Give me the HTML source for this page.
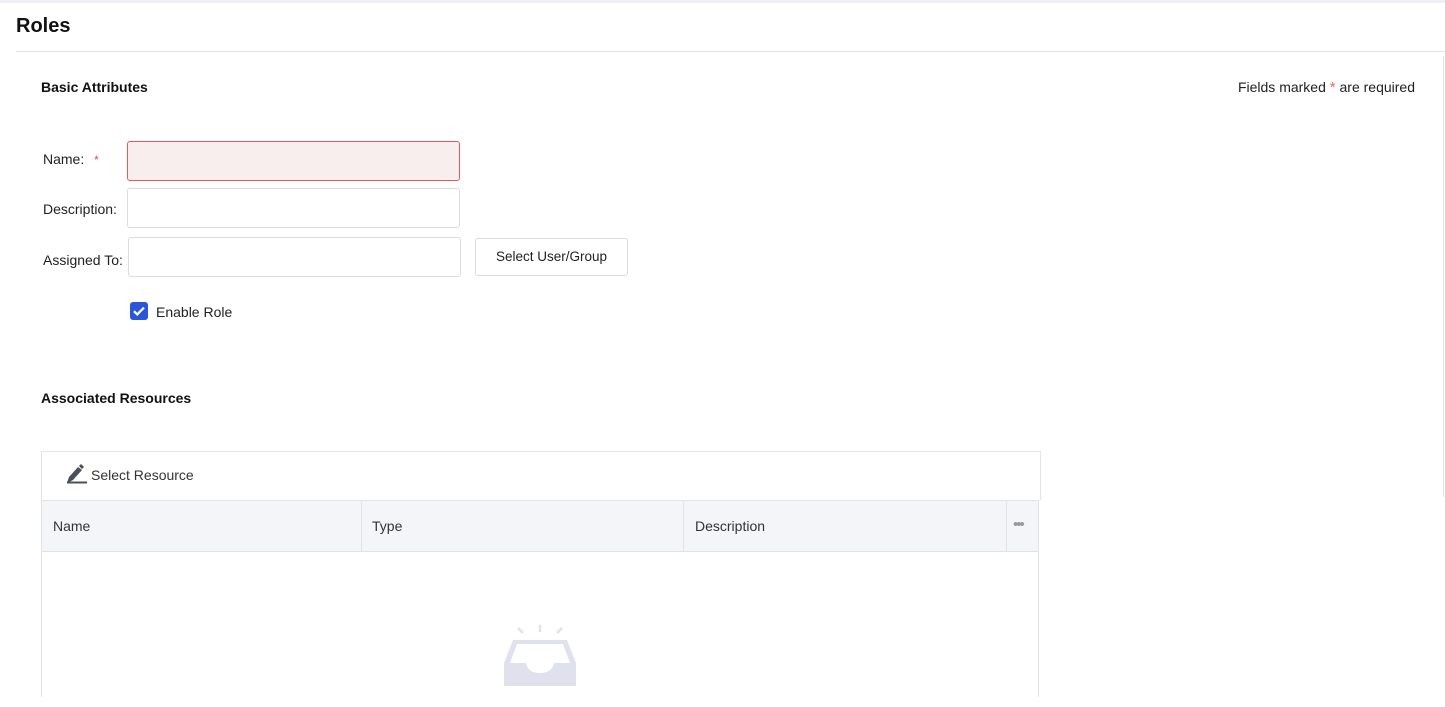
<!DOCTYPE html>
<html><head><meta charset="utf-8"><style>
*{box-sizing:border-box;margin:0;padding:0}
body{width:1445px;height:707px;overflow:hidden;background:#fff;font-family:"Liberation Sans",sans-serif;color:#191919;position:relative}
.a{position:absolute}
.inp{position:absolute;border:1px solid #dcdcdc;border-radius:3px;background:#fff}
.lbl{position:absolute;font-size:14px;color:#222}
</style></head><body>
<div class="a" style="left:0;top:0;width:1445px;height:3px;background:#eef0f5"></div>
<div class="a" style="left:16px;top:15px;font-size:20px;font-weight:bold;color:#111">Roles</div>
<div class="a" style="left:16px;top:51px;width:1429px;height:1px;background:#e2e2e6"></div>
<div class="a" style="left:1443px;top:56px;width:1px;height:441px;background:#e6e6ea"></div>
<div class="a" style="left:41px;top:79px;font-size:14px;font-weight:bold;color:#111">Basic Attributes</div>
<div class="a" style="right:30px;top:79px;font-size:14px;color:#222;white-space:nowrap">Fields marked <span style="color:#e56a6a;font-size:15px">*</span> are required</div>

<div class="lbl" style="left:43px;top:151px">Name: <span style="color:#e5484d;font-size:12px;margin-left:6px">*</span></div>
<div class="inp" style="left:127px;top:141px;width:333px;height:40px;border-color:#e55a5a;background:#f9eeee"></div>
<div class="lbl" style="left:43px;top:201px">Description:</div>
<div class="inp" style="left:127px;top:188px;width:333px;height:40px"></div>
<div class="lbl" style="left:43px;top:252px">Assigned To:</div>
<div class="inp" style="left:128px;top:237px;width:333px;height:40px"></div>
<div class="inp" style="left:475px;top:238px;width:153px;height:38px;font-size:13.5px;color:#222;text-align:center;line-height:36px">Select User/Group</div>

<div class="a" style="left:130px;top:302px;width:18px;height:18px;background:#2c56d8;border-radius:3px">
<svg width="18" height="18" viewBox="0 0 18 18"><path d="M4 9.2l3.2 3.2L14 5.6" stroke="#fff" stroke-width="2.2" fill="none"/></svg></div>
<div class="lbl" style="left:156px;top:304px">Enable Role</div>

<div class="a" style="left:41px;top:390px;font-size:14px;font-weight:bold;color:#111">Associated Resources</div>

<div class="a" style="left:41px;top:451px;width:1000px;height:49px;border:1px solid #e2e2e8;border-bottom:none"></div>
<svg class="a" style="left:66px;top:464px" width="22" height="20" viewBox="0 0 22 20"><path d="M1 19L3 13L12 3L16 6L7 16Z" fill="#4a4f5a"/><path d="M13 2L15 0L18 3L16 5Z" fill="#4a4f5a"/><rect x="1" y="17.5" width="20" height="2" fill="#4a4f5a"/></svg>
<div class="a" style="left:91px;top:467px;font-size:14px;color:#333">Select Resource</div>

<div class="a" style="left:41px;top:500px;width:998px;height:52px;background:#f4f5f8;border:1px solid #e2e2e8"></div>
<div class="a" style="left:361px;top:501px;width:1px;height:50px;background:#e2e2e8"></div>
<div class="a" style="left:683px;top:501px;width:1px;height:50px;background:#e2e2e8"></div>
<div class="a" style="left:1006px;top:501px;width:1px;height:50px;background:#e2e2e8"></div>
<div class="lbl" style="left:53px;top:518px;color:#333">Name</div>
<div class="lbl" style="left:372px;top:518px;color:#333">Type</div>
<div class="lbl" style="left:695px;top:518px;color:#333">Description</div>
<div class="a" style="left:1013px;top:516px;font-size:15px;color:#999;letter-spacing:-2px">•••</div>
<div class="a" style="left:41px;top:552px;width:1px;height:145px;background:#e2e2e8"></div>
<div class="a" style="left:1038px;top:552px;width:1px;height:145px;background:#e2e2e8"></div>

<svg class="a" style="left:503px;top:624px" width="74" height="64" viewBox="0 0 74 64">
<path d="M15 4l5 5M37 1v7M59 4l-5 5" stroke="#dfe2ec" stroke-width="2.5" fill="none"/>
<path d="M10 16h54l9 23v23H1V39Z" fill="#dfe2ec"/>
<path d="M14 20h46l7 19H51q-2 12-14 12T23 39H7Z" fill="#fff"/>
<path d="M3 39h20q2 10 14 10t14-10h20v22H3Z" fill="#dfe2ec"/>
</svg>
</body></html>
